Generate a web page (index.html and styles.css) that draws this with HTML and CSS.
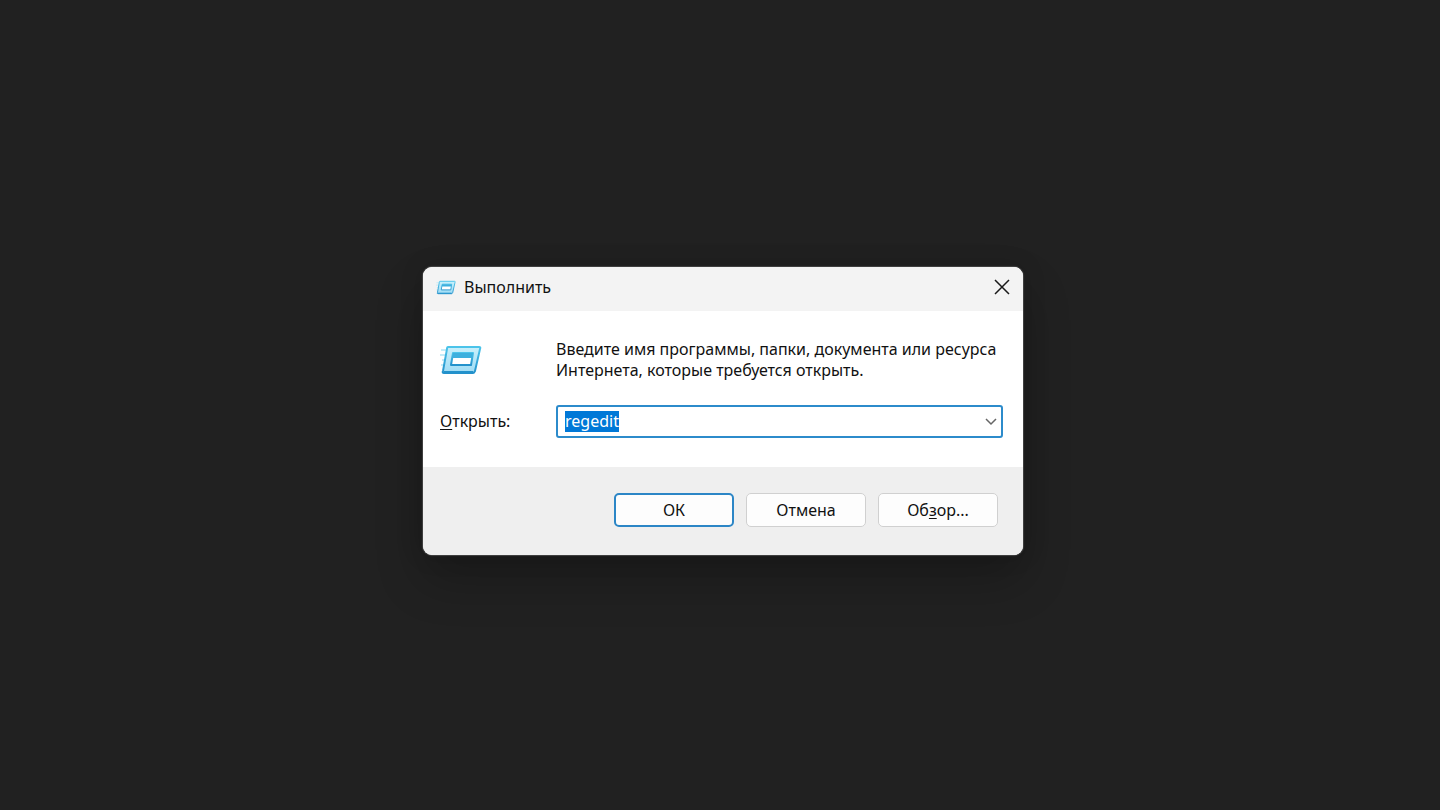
FILE: index.html
```html
<!DOCTYPE html>
<html lang="ru">
<head>
    <meta charset="UTF-8">
    <meta name="viewport" content="width=device-width, initial-scale=1.0">
    <title>Выполнить</title>
    <link rel="stylesheet" href="styles.css">
</head>
<body>

    <!-- Run icon, shared by the title bar and the body -->
    <svg class="sprite" aria-hidden="true">
        <defs>
            <linearGradient id="plate" x1="0" y1="0" x2="0" y2="1">
                <stop offset="0" stop-color="#c9f0fb"/>
                <stop offset="1" stop-color="#9fdcf5"/>
            </linearGradient>
            <linearGradient id="edge" x1="0" y1="0" x2="0" y2="1">
                <stop offset="0" stop-color="#4cc4ea"/>
                <stop offset="1" stop-color="#2391cb"/>
            </linearGradient>
        </defs>
        <symbol id="run" viewBox="0 0 42 30">
            <path d="M1 5h6M0 10h6M2 15h3M1 20h3" stroke="#c3ebf8" stroke-width="2"/>
            <path d="M8 2h31q2 0 1 2l-5 22q-1 2-2 2H4q-2 0-1-2L7 4q0-2 1-2z" fill="url(#plate)" stroke="url(#edge)" stroke-width="2"/>
            <path d="M4 27h29" stroke="#2391cb" stroke-width="2"/>
            <path d="M13 8h20l-2 12H11z" fill="#fff" stroke="url(#edge)" stroke-width="2" stroke-linejoin="round"/>
            <path d="M13 8h20l-1 5H12z" fill="#3db0de"/>
        </symbol>
    </svg>

    <main class="dialog" role="dialog" aria-labelledby="dialogTitle">
        <!-- Title bar -->
        <header class="titlebar">
            <svg class="titlebar-icon" aria-hidden="true"><use href="#run"/></svg>
            <h1 id="dialogTitle">Выполнить</h1>
            <button type="button" class="close-btn" aria-label="Закрыть">
                <svg width="16" height="16" viewBox="0 0 16 16" fill="none" stroke="#1a1a1a" stroke-width="1.5">
                    <path d="M1 1l14 14M15 1L1 15"/>
                </svg>
            </button>
        </header>

        <form id="runForm">
            <div class="content">
                <svg class="run-icon" aria-hidden="true"><use href="#run"/></svg>
                <p>Введите имя программы, папки, документа или ресурса Интернета, которые требуется открыть.</p>

                <label for="command"><u>О</u>ткрыть:</label>
                <div class="combo">
                    <input type="text" id="command" value="regedit" autocomplete="off" spellcheck="false">
                    <button type="button" class="combo-btn" aria-label="Показать список">
                        <svg width="12" height="8" viewBox="0 0 12 8" fill="none" stroke="#666" stroke-width="1.5">
                            <path d="M1 1l5 5 5-5"/>
                        </svg>
                    </button>
                </div>
            </div>

            <!-- Buttons -->
            <footer class="actions">
                <button type="submit" class="btn btn-default">ОК</button>
                <button type="button" class="btn">Отмена</button>
                <button type="button" class="btn">Об<u>з</u>ор...</button>
            </footer>
        </form>
    </main>

    <script>
        // The command is selected as soon as the dialog opens
        const command = document.getElementById('command');
        command.focus();
        command.select();

        document.getElementById('runForm').addEventListener('submit', function(e) {
            e.preventDefault();
        });
    </script>

</body>
</html>
```
FILE: styles.css
```css
* {
    box-sizing: border-box;
}

body {
    display: flex;
    align-items: center;
    justify-content: center;
    min-height: 100vh;
    margin: 0;
    padding: 12px 0 0 6px;
    background-color: #212121;
    color: #111;
    font-family: "Noto Sans", "Open Sans", sans-serif;
    font-size: 16px;
    line-height: 21px;
}

button,
input {
    font: inherit;
    color: inherit;
}

u {
    text-underline-offset: 2px;
}

.sprite {
    position: absolute;
    width: 0;
    height: 0;
}

/* Dialog */
.dialog {
    width: 100%;
    max-width: 600px;
    border-radius: 9px;
    overflow: hidden;
    background-color: #fff;
    box-shadow: 0 0 1px 1px #444, 0 24px 48px rgba(0, 0, 0, 0.24), 0 0 24px rgba(0, 0, 0, 0.14);
}

/* Title bar */
.titlebar {
    display: flex;
    align-items: center;
    height: 44px;
    padding: 0 13px 4px;
    background-color: #f3f3f3;
}

.titlebar-icon {
    width: 20px;
    height: 15px;
    margin-right: 8px;
}

.titlebar h1 {
    flex: 1;
    margin: 0;
    font-size: 16px;
    font-weight: normal;
}

.close-btn {
    display: flex;
    padding: 0;
    border: none;
    background: none;
}

/* Content */
.content {
    display: grid;
    grid-template-columns: 116px 1fr;
    row-gap: 24px;
    align-items: center;
    padding: 28px 20px 29px 17px;
}

.content p {
    margin: 0;
}

.run-icon {
    width: 42px;
    height: 30px;
}

.combo {
    display: flex;
    align-items: center;
    height: 33px;
    border: 2px solid #2c8bcb;
    border-radius: 3px;
    background-color: #fff;
}

.combo input {
    flex: 1;
    min-width: 0;
    padding: 0 7px;
    border: none;
    outline: none;
    background: none;
}

.combo input::selection {
    background-color: #0078d7;
    color: #fff;
}

.combo-btn {
    display: flex;
    padding: 4px;
    border: none;
    background: none;
}

/* Buttons */
.actions {
    display: flex;
    justify-content: flex-end;
    gap: 12px;
    padding: 26px 25px 28px;
    background-color: #efefef;
}

.btn {
    width: 120px;
    height: 34px;
    padding: 0;
    border: 1px solid #d0d0d0;
    border-radius: 5px;
    background-color: #fdfdfd;
}

.btn-default {
    border: 2px solid #2c86c6;
}
```
